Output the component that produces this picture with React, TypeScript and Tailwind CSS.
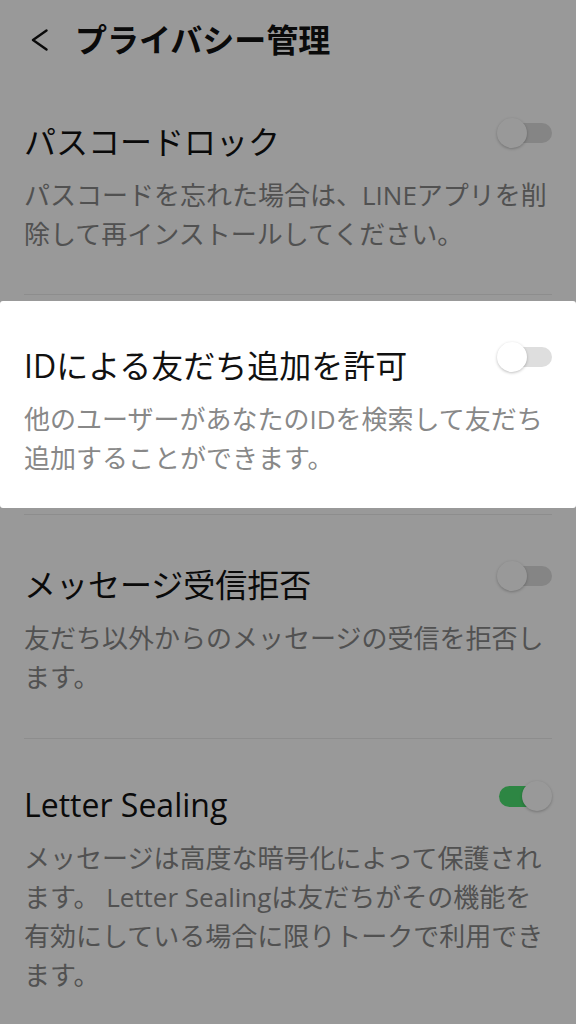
const font = { fontFamily: '"Open Sans", "Noto Sans CJK JP", sans-serif' };

const Toggle = ({ on }: { on?: boolean }) => (
  <div className="relative w-[55px] h-[30px] shrink-0">
    <div
      className={
        on
          ? "absolute right-[2px] top-[5px] h-[21px] w-[51px] rounded-full bg-[#4ce070]"
          : "absolute right-0 top-[5px] h-[20px] w-[50px] rounded-full bg-[#dedede]"
      }
    />
    <div
      className={
        on
          ? "absolute right-0 top-0 h-[30px] w-[30px] rounded-full bg-white shadow-[0_1px_3px_rgba(0,0,0,0.25)]"
          : "absolute left-0 top-0 h-[30px] w-[30px] rounded-full bg-white shadow-[0_1px_3px_rgba(0,0,0,0.25)]"
      }
    />
  </div>
);

type RowProps = { title: string; desc: string; on?: boolean };

const RowBody = ({ title, desc, on }: RowProps) => (
  <div className="px-6">
    <div className="flex items-start justify-between">
      <div className="text-[32px] leading-[40px] text-[#111]">{title}</div>
      <div className="-mt-[4px]">
        <Toggle on={on} />
      </div>
    </div>
    <p className="mt-[14px] text-[26px] leading-[39px] text-[#888]">{desc}</p>
  </div>
);

export default function App() {
  return (
    <div className="relative min-h-[1024px] w-[576px] overflow-hidden bg-white" style={font}>
      {/* header */}
      <div className="flex h-20 items-center pl-[31px]">
        <svg width="18" height="22" viewBox="0 0 18 22" fill="none" className="shrink-0">
          <polyline points="15.5,1.5 2,11 15.5,20.5" stroke="#111" strokeWidth="2.4" strokeLinecap="round" strokeLinejoin="round" />
        </svg>
        <h1 className="ml-[26px] text-[32px] font-bold leading-[40px] text-[#111]">プライバシー管理</h1>
      </div>

      {/* passcode */}
      <div className="pt-[42px] pb-[40px]">
        <RowBody
          title="パスコードロック"
          desc="パスコードを忘れた場合は、LINEアプリを削除して再インストールしてください。"
        />
      </div>
      <div className="mx-6 h-px bg-[#ececec]" />

      {/* highlighted row, sits above the dim layer */}
      <div className="py-[6px]">
        <div className="relative z-10 rounded-[3px] bg-white pt-[45px] pb-[30px]">
          <RowBody
            title="IDによる友だち追加を許可"
            desc="他のユーザーがあなたのIDを検索して友だち追加することができます。"
          />
        </div>
      </div>
      <div className="mx-6 h-px bg-[#ececec]" />

      <div className="pt-[50px] pb-[41px]">
        <RowBody
          title="メッセージ受信拒否"
          desc="友だち以外からのメッセージの受信を拒否します。"
        />
      </div>
      <div className="mx-6 h-px bg-[#ececec]" />

      <div className="pt-[46px] pb-[40px]">
        <RowBody
          title="Letter Sealing"
          desc="メッセージは高度な暗号化によって保護されます。 Letter Sealingは友だちがその機能を有効にしている場合に限りトークで利用できます。"
          on
        />
      </div>

      {/* dim layer */}
      <div className="absolute inset-0 z-[5] bg-black/40" />
    </div>
  );
}
